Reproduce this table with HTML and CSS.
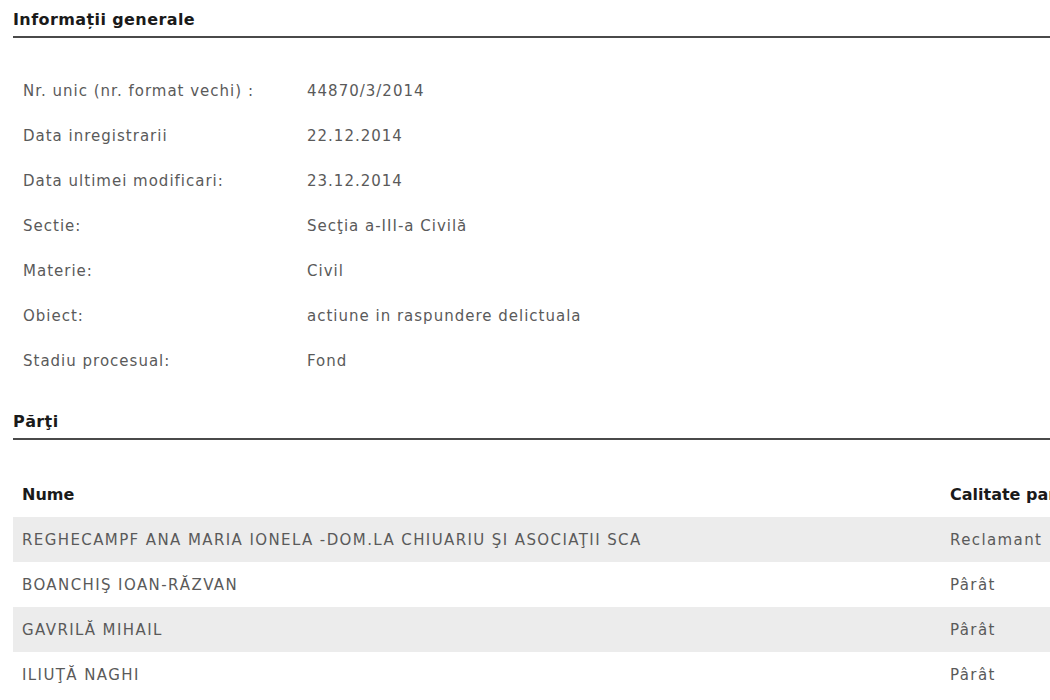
FILE: index.html
```html
<!DOCTYPE html>
<html lang="ro">
<head>
    <meta charset="UTF-8">
    <title>Informații dosar</title>
    <link rel="stylesheet" href="styles.css">
</head>
<body>
    <div class="page">
        <!-- Informatii generale -->
        <h2 class="section-title">Informații generale</h2>
        <table class="info">
            <tr><td class="label">Nr. unic (nr. format vechi) :</td><td>44870/3/2014</td></tr>
            <tr><td class="label">Data inregistrarii</td><td>22.12.2014</td></tr>
            <tr><td class="label">Data ultimei modificari:</td><td>23.12.2014</td></tr>
            <tr><td class="label">Sectie:</td><td>Secţia a-III-a Civilă</td></tr>
            <tr><td class="label">Materie:</td><td>Civil</td></tr>
            <tr><td class="label">Obiect:</td><td>actiune in raspundere delictuala</td></tr>
            <tr><td class="label">Stadiu procesual:</td><td>Fond</td></tr>
        </table>

        <!-- Parti -->
        <h2 class="section-title">Părţi</h2>
        <table class="parti">
            <thead>
                <tr><th class="col-nume">Nume</th><th>Calitate parte</th></tr>
            </thead>
            <tbody>
                <tr><td>REGHECAMPF ANA MARIA IONELA -DOM.LA CHIUARIU ŞI ASOCIAŢII SCA</td><td>Reclamant</td></tr>
                <tr><td>BOANCHIŞ IOAN-RĂZVAN</td><td>Pârât</td></tr>
                <tr><td>GAVRILĂ MIHAIL</td><td>Pârât</td></tr>
                <tr><td>ILIUŢĂ NAGHI</td><td>Pârât</td></tr>
            </tbody>
        </table>
    </div>
</body>
</html>
```

FILE: styles.css
```css
html, body {
    margin: 0;
    padding: 0;
    overflow: hidden;
    background-color: #fff;
}
body {
    font-family: "DejaVu Sans", Verdana, sans-serif;
    font-size: 15px;
    color: #5a5a5a;
}
.page {
    width: 1200px;
    padding-left: 13px;
}
.section-title {
    margin: 0;
    padding: 10px 0 6px 0;
    font-size: 16px;
    line-height: 20px;
    font-weight: bold;
    letter-spacing: 0.4px;
    color: #1a1a1a;
    border-bottom: 2px solid #4a4a4a;
}
table {
    border-collapse: collapse;
}
.info {
    margin-top: 30px;
    margin-bottom: 19px;
}
.info td {
    height: 45px;
    padding: 0 0 0 10px;
    letter-spacing: 1px;
    vertical-align: middle;
}
.info td.label {
    width: 274px;
}
.parti {
    width: 1150px;
    margin-top: 32px;
}
.parti th {
    height: 45px;
    padding: 0 0 0 9px;
    text-align: left;
    font-size: 16px;
    color: #1a1a1a;
}
.parti th.col-nume {
    width: 919px;
}
.parti td {
    height: 45px;
    padding: 0 0 0 9px;
    letter-spacing: 1.4px;
}
.parti tbody tr:nth-child(odd) {
    background-color: #ececec;
}
```
